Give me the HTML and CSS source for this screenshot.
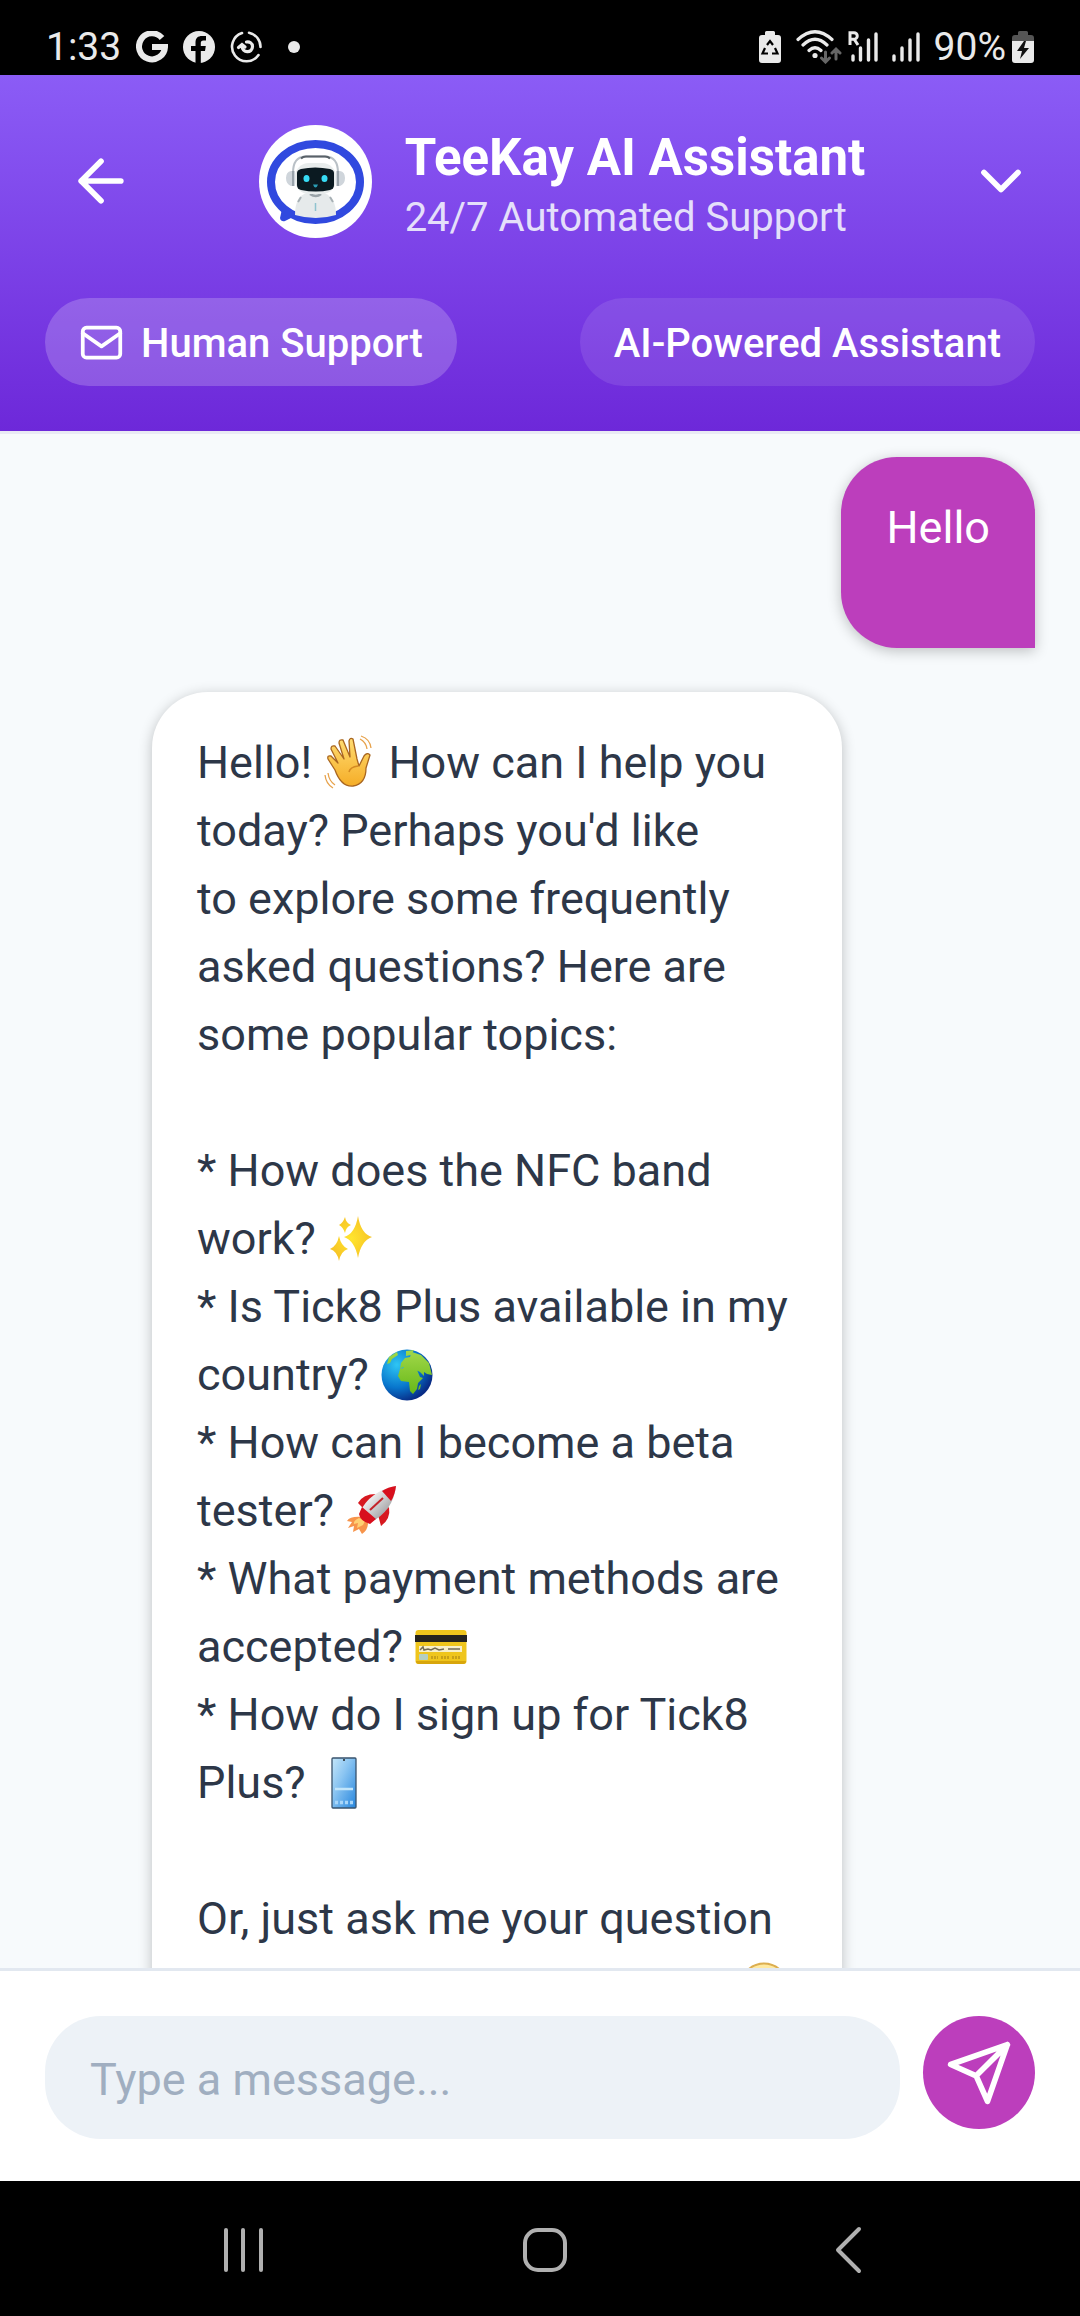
FILE: index.html
```html
<!DOCTYPE html>
<html lang="en">
<head>
<meta charset="utf-8">
<meta name="viewport" content="width=device-width, initial-scale=1">
<title>TeeKay AI Assistant</title>
<link rel="stylesheet" href="styles.css">
</head>
<body>
<div class="status">
  <div class="status-left">
    <span class="clock">1:33</span>
    <svg class="status-icon" viewBox="0 0 32 32" aria-label="Google"><path d="M26 7A13 13 0 1 0 29 16H16" fill="none" stroke="#eaeaea" stroke-width="6"/></svg>
    <svg class="status-icon" viewBox="0 0 32 32" aria-label="Facebook"><circle cx="16" cy="16" r="16" fill="#eaeaea"/><path d="M12.500 32V20H8v-5h4.500v-3.500c0-4.500 2.500-6.500 6.500-6.500h4v4.500h-2.500c-2 0-2.700 1-2.700 2.500v3h5l-.8 5H17.800v12z" fill="#000"/></svg>
    <svg class="status-icon" viewBox="0 0 32 32" aria-label="App" fill="none" stroke="#eaeaea" stroke-width="2.600" stroke-linecap="round"><path d="M12 2A14.500 14.500 0 1 0 28.500 24M19 1.700A14.500 14.500 0 0 1 30.500 16"/><path d="M8.500 16.500l3.500-3 3 2.500M12 14.500c0 8 10.500 8 10.500 1 0-3.500-3-5-6-4.500" stroke-width="3.200"/></svg>
    <span class="dot"></span>
  </div>
  <div class="status-right">
    <svg width="22" height="32" viewBox="0 0 22 32" aria-label="Battery protection"><path d="M6 4V1.500Q6 0 7.500 0h7Q16 0 16 1.500V4h3q3 0 3 3v22q0 3-3 3H3q-3 0-3-3V7q0-3 3-3z" fill="#eaeaea"/><path d="M8 14l3-4 3 4M16 17l2.500 5.500H13M9 22.500H3.500L6 17" fill="none" stroke="#000" stroke-width="2.200"/></svg>
    <svg class="wifi" width="46" height="34" viewBox="0 0 46 34" aria-label="Wi-Fi" fill="none" stroke-linecap="round"><path d="M2 9.500Q19-6 36 9.500M7 15Q19 3.500 31 15M13 20.500Q19 15 25 20.500" stroke="#eaeaea" stroke-width="3.200"/><circle cx="19" cy="25.500" r="2.600" fill="#eaeaea"/><path d="M29.500 22v9M25.500 28l4 4 4-4M40 29V20M36 23l4-4 4 4" stroke="#666" stroke-width="3"/></svg>
    <svg class="roam" width="30" height="32" viewBox="0 0 30 32" aria-label="Roaming signal" fill="none" stroke="#eaeaea" stroke-width="3.400"><path d="M2 14V1.700h4a3 3 0 0 1 0 6.500H2M6 8l4 6" stroke-width="3"/><path d="M5 25v4M12.500 17v12M20.500 9v20M28 3v26" stroke-linecap="round"/></svg>
    <svg class="signal" width="28" height="32" viewBox="0 0 28 32" aria-label="Signal" fill="none" stroke="#eaeaea" stroke-width="3.400" stroke-linecap="round"><path d="M2 25v4M10 17v12M18 9v20M26 3v26"/></svg>
    <span class="percent">90%</span>
    <svg width="22" height="32" viewBox="0 0 22 32" aria-label="Charging"><path d="M6 4V1.500Q6 0 7.500 0h7Q16 0 16 1.500V4h3q3 0 3 3v3H0V7q0-3 3-3z" fill="#555"/><path d="M0 10h22v19q0 3-3 3H3q-3 0-3-3z" fill="#eaeaea"/><path d="M12 10L5 20h5l-2 8 9-11h-5l2-7z" fill="#111"/></svg>
  </div>
</div>

<header class="header">
  <div class="header-row">
    <button class="back" type="button" aria-label="Back"><svg class="icon" viewBox="0 0 24 24"><path d="M19 12H5M12 19l-7-7 7-7"/></svg></button>
    <div class="agent">
      <svg class="avatar" viewBox="0 0 113 113" aria-label="Robot avatar">
        <circle cx="56.500" cy="56.500" r="56.500" fill="#fff"/>
        <path d="M23 84L21 93q1 4 5 3l10-5z" fill="#3049df"/>
        <ellipse cx="56.500" cy="57" rx="44.500" ry="38" fill="#fff" stroke="#3049df" stroke-width="8"/>
        <path d="M36 90q0-19 12-22h17q12 4 12 22-20 6-41 0z" fill="#e6eaeb"/>
        <path d="M42 72l-3 5M71 72l3 5" stroke="#a7b0b5" stroke-width="2"/>
        <path d="M51 69q6 4 11 0" fill="none" stroke="#9aa3a8" stroke-width="2.500"/>
        <path d="M56.500 78v8" stroke="#8fc3cf" stroke-width="1.500"/>
        <rect x="36" y="38" width="41" height="31" rx="14" fill="#e8ecec"/>
        <path d="M34 48Q34 32 46 31.500h21Q79 32 79 48" fill="none" stroke="#b9c0c6" stroke-width="2"/>
        <path d="M42 33.500q2-2 5-2h19q3 0 5 2" fill="none" stroke="#596168" stroke-width="2"/>
        <path d="M36 46h-4q-5 1-5 7t5 8h4zM77 46h4q5 1 5 7t-5 8h-4z" fill="#cfd5db"/>
        <path d="M34 46v15M79 46v15" stroke="#88929c" stroke-width="1.500"/>
        <path d="M38 48q0-3 4-4 14-3 29 0 4 1 4 4v12q0 4-4 5-14 3-29 0-4-1-4-5z" fill="#0b1a21"/>
        <ellipse cx="47.500" cy="53.500" rx="3" ry="3.500" fill="#37dcf5"/><ellipse cx="65.500" cy="53.500" rx="3" ry="3.500" fill="#37dcf5"/>
        <path d="M54 59.500h5q-1 3-2.500 3t-2.500-3z" fill="#2b9db5"/>
      </svg>
      <div class="agent-text">
        <h1 class="title">TeeKay AI Assistant</h1>
        <p class="subtitle">24/7 Automated Support</p>
      </div>
    </div>
    <button class="collapse" type="button" aria-label="Collapse"><svg class="icon" viewBox="0 0 24 24"><path d="M6 9l6 6 6-6"/></svg></button>
  </div>
  <div class="header-row pills">
    <button class="pill pill-human" type="button"><svg class="icon mail" viewBox="0 0 24 24"><rect x="2" y="3" width="20" height="16" rx="2"/><path d="M22 6l-10 7L2 6"/></svg>Human Support</button>
    <span class="pill">AI-Powered Assistant</span>
  </div>
</header>

<main class="chat">
  <div class="bubble user">Hello</div>
  <div class="bubble bot">
    <p>Hello! <svg class="emoji" viewBox="0 0 52 52" role="img" aria-label="waving hand"><defs><linearGradient id="skin" x1="0" y1="0" x2="0" y2="1"><stop offset="0" stop-color="#ffdc72"/><stop offset="1" stop-color="#f5ad27"/></linearGradient></defs><path d="M11 33L4 22q-1-4 3-3l7 7L7 12q0-4 4-3l9 13L15 6q0-4 4-3l7 17L25 4q1-4 4-2l4 20 2 7 5-10q3-4 6-1l-4 13q0 16-13 18-12 1-18-16z" fill="url(#skin)" stroke="#a96620" stroke-width="1.300" stroke-linejoin="round"/><path d="M25 35q1-5 9-6" fill="none" stroke="#d58a22" stroke-width="1.500"/><path d="M36 2q6 3 7 10M37-1q9 3 10 12M4 36q1 8 7 12M1 38q1 9 8 13" fill="none" stroke="#e7a24b" stroke-width="1.300"/></svg> How can I help you<br>today? Perhaps you'd like<br>to explore some frequently<br>asked questions? Here are<br>some popular topics:</p>
    <p>* How does the NFC band<br>work? <svg class="emoji" viewBox="0 0 52 52" role="img" aria-label="sparkles"><defs><radialGradient id="gold"><stop offset="0" stop-color="#ffe52e"/><stop offset="1" stop-color="#f7c526"/></radialGradient></defs><path fill="url(#gold)" d="M30 3q3 18 14 21-11 4-14 21-3-17-14-21 11-3 14-21zM17 4q1 6 6 8-5 2-6 8-2-6-6-8 4-2 6-8zM11 23q2 10 9 13-7 2-9 12-2-10-9-12 7-3 9-13z"/></svg><br>* Is Tick8 Plus available in my<br>country? <svg class="emoji" viewBox="0 0 52 52" role="img" aria-label="globe"><defs><radialGradient id="sea" cx=".3" cy=".3" r=".75"><stop offset="0" stop-color="#2ec6f4"/><stop offset=".6" stop-color="#0875cc"/><stop offset="1" stop-color="#082b85"/></radialGradient><linearGradient id="land" x1="0" y1="0" x2="0" y2="1"><stop offset="0" stop-color="#a2d84a"/><stop offset="1" stop-color="#67b818"/></linearGradient></defs><circle cx="26" cy="26" r="25.500" fill="url(#sea)"/><path fill="url(#land)" d="M8 8l8-5 1 3-6 4-2 4-3 1zM25 2l8-1-3 5-5 1zM20 14l4-5 5-1 2-5 9 3 8 8 3 12-5-1-3-2 0 4-4-4-4-2-4 1-3-3-4 1-2-2-3 2zM19 20l7-2 6 2 4 1 3 7 3 1-5 5-1 6-4 5-3-3-1-9-8-1-3-5zM38 37l2-2-1 5-2 1z"/></svg><br>* How can I become a beta<br>tester? <svg class="emoji" viewBox="0 0 52 52" role="img" aria-label="rocket"><defs><linearGradient id="hull" x1="0" y1="0" x2="1" y2="1"><stop offset=".2" stop-color="#fff"/><stop offset=".8" stop-color="#9b9b9d"/></linearGradient></defs><path d="M16 32Q4 31 1 36l5 1-4 6 6-2-1 6 6-3 3 5q6-4 6-11z" fill="#f7944b"/><path d="M13 33q-6 3-5 6l4-1-1 5 6-3 2-4z" fill="#ffd073"/><path d="M12 18q5-9 18-9L18 24zM43 22q2 12-8 19l-3-11z" fill="#d71920"/><path d="M14 27Q24 6 50 1q-3 25-25 36z" fill="url(#hull)"/><path d="M36 6q6-4 14-5-1 9-5 15zM16 22l-3 7q1 7 11 10l6-5z" fill="#d80f1d"/><path d="M24 25L37 13" stroke="#c42329" stroke-width="2"/></svg><br>* What payment methods are<br>accepted? <svg class="emoji" viewBox="0 0 52 52" role="img" aria-label="credit card"><rect x=".5" y="9" width="51" height="34" rx="3" fill="#efc51c"/><path d="M1 40q0 3 3 3h44q3 0 3-3z" fill="#d8a60c"/><path d="M0 14h52v7H0z" fill="#25231e"/><path d="M4 25h43v6H4z" fill="#f7efc9"/><path d="M5 29l3-3 1 3 4-1 3 1 4-2 4 2 5-1M33 28h12" fill="none" stroke="#716b55" stroke-width="1.500"/><rect x="4" y="33" width="9" height="6" rx="1" fill="#b5cfc0"/><path d="M16 36.500h7M26 36.500h8M37 36.500h9" stroke="#c8a018" stroke-width="3" stroke-dasharray="2 1"/></svg><br>* How do I sign up for Tick8<br>Plus? <svg class="emoji" viewBox="0 0 52 52" role="img" aria-label="mobile phone"><defs><linearGradient id="screen" x1="0" y1="0" x2="1" y2="1"><stop offset="0" stop-color="#c5e6f8"/><stop offset=".4" stop-color="#8bc5f2"/><stop offset="1" stop-color="#2585dd"/></linearGradient></defs><rect x="14" y="1" width="24" height="50" rx="1" fill="url(#screen)" stroke="#39536d" stroke-width="1.300"/><circle cx="26" cy="3" r="1" fill="#222"/><path d="M17 32h18" stroke="#c2e5fa" stroke-width="2.500"/><path d="M17 45.500h18" stroke="#a8d6fa" stroke-width="3.500" stroke-dasharray="3 2"/></svg></p>
    <p>Or, just ask me your question</p>
    <div class="last-line"><svg class="emoji" viewBox="0 0 52 52" role="img" aria-label="smiling face"><circle cx="26" cy="26" r="23.500" fill="#ffe9a0" stroke="#dcae50" stroke-width="2"/><path d="M15 22q3-4 6 0M31 22q3-4 6 0M16 32q10 12 20 0" fill="none" stroke="#7d4b18" stroke-width="2.500"/></svg></div>
  </div>
</main>

<form class="composer">
  <input class="message" type="text" placeholder="Type a message..." aria-label="Message">
  <button class="send" type="button" aria-label="Send"><svg class="icon" viewBox="0 0 24 24"><path d="M22 2L11 13M22 2l-7 20-4-9-9-4z"/></svg></button>
</form>

<nav class="nav">
  <button type="button" aria-label="Recent apps"><svg width="44" height="48" viewBox="0 0 44 48"><path d="M5 4v40M22 4v40M40 4v40"/></svg></button>
  <button type="button" aria-label="Home"><svg width="48" height="48" viewBox="0 0 48 48"><rect x="4" y="4" width="40" height="40" rx="13"/></svg></button>
  <button type="button" aria-label="Go back"><svg width="48" height="48" viewBox="0 0 48 48"><path d="M35 3L14 24l21 21"/></svg></button>
</nav>
</body>
</html>
```
FILE: styles.css
```css
* { box-sizing: border-box; }
body {
  margin: 0;
  height: 100vh;
  display: flex;
  flex-direction: column;
  font-family: Roboto, "Liberation Sans", sans-serif;
  font-size: 45px;
  line-height: 68px;
  color: #2d3748;
  background: #f7fafc;
}
h1, p { margin: 0; }
button { border: 0; padding: 0; background: none; font: inherit; color: inherit; display: flex; align-items: center; justify-content: center; }
svg { display: block; flex: none; }

.icon { width: 68px; height: 68px; fill: none; stroke: #fff; stroke-width: 2; stroke-linecap: round; stroke-linejoin: round; }

.status { flex: none; background: #000; color: #eaeaea; display: flex; justify-content: space-between; padding: 20px 46px 0; height: 75px; font-size: 39px; line-height: 54px; }
.status-left, .status-right { display: flex; align-items: center; height: 54px; }
.status-left { gap: 15px; }
.status-icon { width: 32px; height: 32px; }
.dot { width: 12px; height: 12px; margin-left: 11px; border-radius: 50%; background: #eaeaea; }
.wifi { margin-left: 15px; }
.roam { margin-left: 6px; }
.signal { margin-left: 14px; }
.percent { margin: 0 6px 0 14px; }

.header { flex: none; padding: 49px 45px 45px; color: #fff; background: linear-gradient(#8b5cf6, #6d28d9); }
.header-row { display: flex; align-items: center; justify-content: space-between; }
.back { padding: 0 22px; }
.agent { display: flex; align-items: center; gap: 33px; height: 114px; }
.agent-text { padding-top: 5px; }
.avatar { width: 113px; height: 113px; }
.title { font-size: 51px; line-height: 62px; font-weight: 700; }
.subtitle { margin-top: 6px; font-size: 40px; line-height: 46px; color: #e4dffa; }
.pills { margin-top: 60px; }
.pill { height: 88px; padding: 4px 34px 0; display: flex; align-items: center; gap: 17px; border-radius: 44px; background: rgba(255, 255, 255, 0.1); font-size: 40px; line-height: 46px; font-weight: 500; }
.pill-human { background: rgba(255, 255, 255, 0.2); }
.mail { width: 45px; height: 45px; }

.chat { flex: 1; min-height: 0; overflow: hidden; border-top: 3px solid #e9eaf4; padding: 23px 45px 0; display: flex; flex-direction: column; gap: 44px; }
.bubble { flex: none; padding: 37px 45px 86px; border-radius: 56px; box-shadow: 0 3px 14px rgba(0, 0, 0, 0.24); }
.user { align-self: flex-end; color: #fff; background: #bc3ebc; border-bottom-right-radius: 0; }
.bot { margin: 0 193px 0 107px; background: #fff; border-bottom-left-radius: 0; }
.bot p + p { margin-top: 68px; }
.emoji { display: inline-block; width: 52px; height: 52px; margin: -8px 1px; vertical-align: -3px; overflow: visible; }
.last-line { display: flex; align-items: center; justify-content: flex-end; height: 68px; padding-right: 6px; }

.composer { flex: none; display: flex; gap: 23px; padding: 45px 45px 42px; border-top: 3px solid #e2e8f0; background: #fff; }
.message { flex: 1; min-width: 0; height: 123px; padding: 3px 45px 0; border: 0; border-radius: 56px; background: #edf2f7; font: inherit; color: #2d3748; }
.message::placeholder { color: #a0aec0; opacity: 1; }
.send { width: 112px; height: 113px; border-radius: 50%; background: #bc3ebc; }

.nav { flex: none; height: 135px; padding: 2px 81px 0 92px; display: grid; grid-template-columns: repeat(3, 1fr); background: #000; }
.nav svg { fill: none; stroke: #b0b0b0; stroke-width: 4; stroke-linecap: round; stroke-linejoin: round; }
```
